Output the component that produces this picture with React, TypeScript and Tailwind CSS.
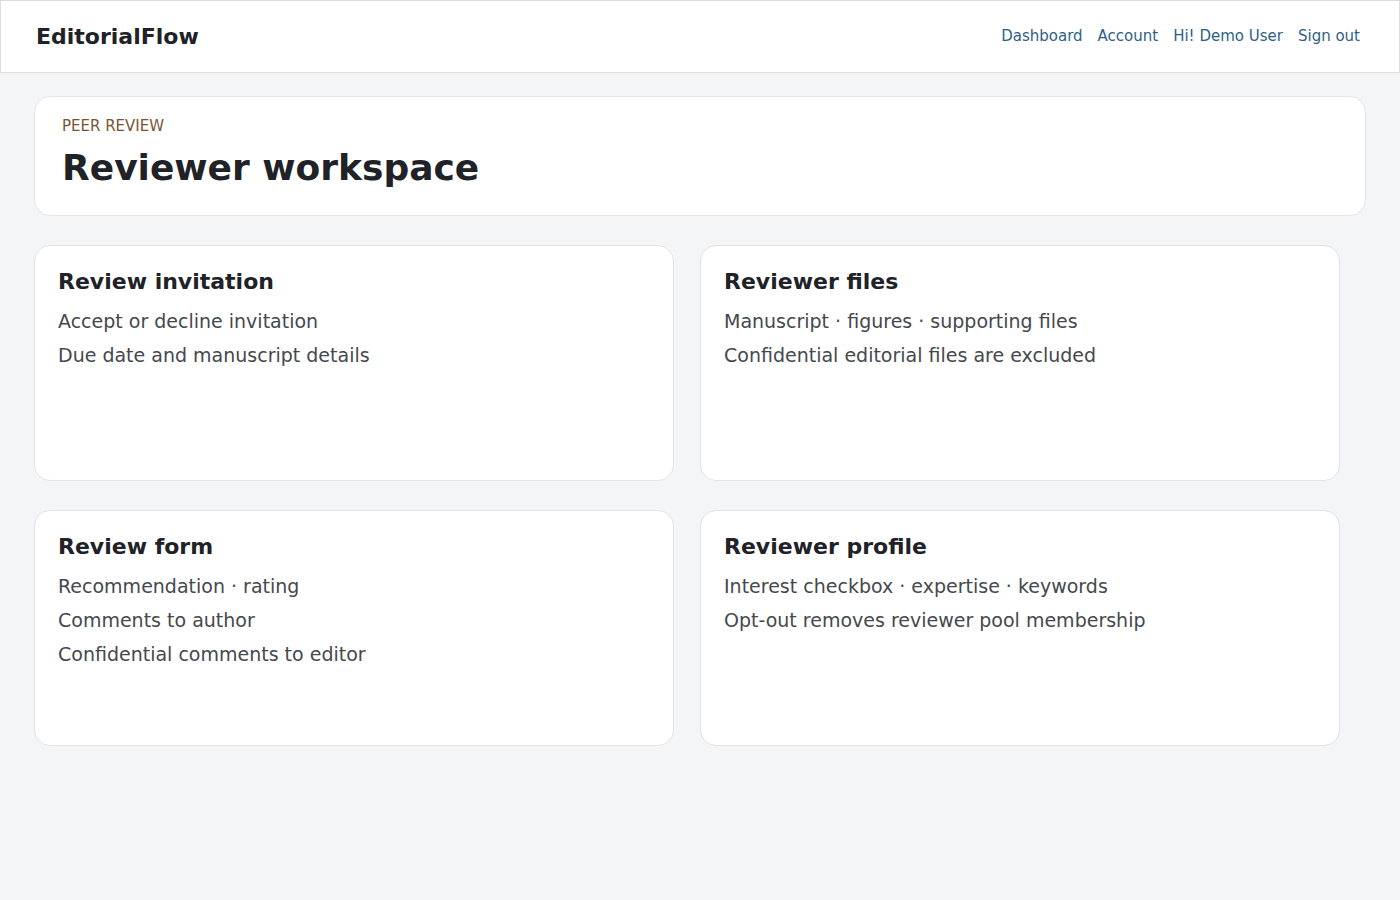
const cards = [
  { title: "Review invitation", lines: ["Accept or decline invitation", "Due date and manuscript details"] },
  { title: "Reviewer files", lines: ["Manuscript · figures · supporting files", "Confidential editorial files are excluded"] },
  { title: "Review form", lines: ["Recommendation · rating", "Comments to author", "Confidential comments to editor"] },
  { title: "Reviewer profile", lines: ["Interest checkbox · expertise · keywords", "Opt-out removes reviewer pool membership"] },
]

export default function App() {
  return (
    <div className="min-h-[900px] bg-[#f4f5f7] text-[#202228]" style={{ fontFamily: '"DejaVu Sans", sans-serif' }}>
      <header className="h-[73px] bg-white border border-[#dcdde0] flex items-center justify-between pl-[35px] pr-[39px]">
        <span className="text-[22px] font-bold text-[#202228]">EditorialFlow</span>
        <nav className="flex gap-[15px] text-[15px] text-[#2f5f86]">
          <a>Dashboard</a>
          <a>Account</a>
          <a>Hi! Demo User</a>
          <a>Sign out</a>
        </nav>
      </header>
      <main className="px-[34px] pt-[23px]">
        <section className="bg-white border border-[#e1e3e7] rounded-2xl px-[27px] pt-[18px] h-[120px]">
          <div className="text-[15px] uppercase text-[#7a5535]">Peer review</div>
          <h1 className="text-[36px] font-bold leading-[52px] mt-[4px]">Reviewer workspace</h1>
        </section>
        <div className="grid grid-cols-[640px_640px] gap-x-[26px] gap-y-[29px] mt-[29px]">
          {cards.map((c) => (
            <div key={c.title} className="bg-white border border-[#e1e3e7] rounded-2xl h-[236px] px-[23px] pt-[20px]">
              <h2 className="text-[22px] font-bold leading-[32px]">{c.title}</h2>
              <div className="mt-[6px] text-[19px] text-[#45484e] leading-[34px]">
                {c.lines.map((l) => <div key={l}>{l}</div>)}
              </div>
            </div>
          ))}
        </div>
      </main>
    </div>
  )
}
